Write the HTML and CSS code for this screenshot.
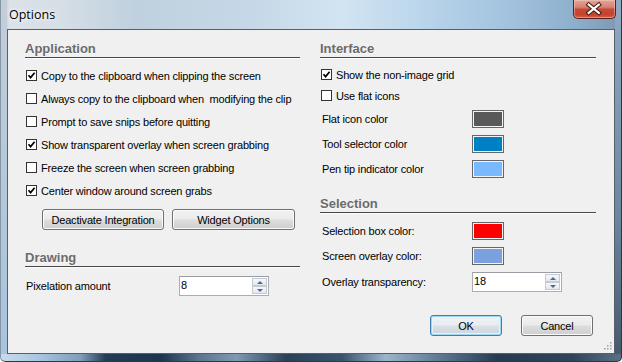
FILE: index.html
```html
<!DOCTYPE html>
<html lang="en">
<head>
    <meta charset="UTF-8">
    <title>Options</title>
    <link rel="stylesheet" href="styles.css">
</head>
<body>
    <div class="window">
        <div class="titlebar">
            <span class="title">Options</span>
            <div class="close">
                <svg width="43" height="19" viewBox="0 0 43 19">
                    <path d="M16 4.5 L26.5 13 M26.5 4.5 L16 13" stroke="#3b1510" stroke-width="4.2" stroke-linecap="square"/>
                    <path d="M16 4.5 L26.5 13 M26.5 4.5 L16 13" stroke="#fff" stroke-width="2.2" stroke-linecap="square"/>
                </svg>
            </div>
        </div>

        <div class="client">
            <div class="col">
                <h3 class="group">Application</h3>
                <ul class="checks">
                    <li><span class="box"><svg viewBox="0 0 9 9"><path d="M1.5 4.2 L3.6 6.6 L7.6 1.8"/></svg></span>Copy to the clipboard when clipping the screen</li>
                    <li><span class="box"></span>Always copy to the clipboard when&nbsp; modifying the clip</li>
                    <li><span class="box"></span>Prompt to save snips before quitting</li>
                    <li><span class="box"><svg viewBox="0 0 9 9"><path d="M1.5 4.2 L3.6 6.6 L7.6 1.8"/></svg></span>Show transparent overlay when screen grabbing</li>
                    <li><span class="box"></span>Freeze the screen when screen grabbing</li>
                    <li><span class="box"><svg viewBox="0 0 9 9"><path d="M1.5 4.2 L3.6 6.6 L7.6 1.8"/></svg></span>Center window around screen grabs</li>
                </ul>
                <div class="actions">
                    <button class="btn btn-deactivate">Deactivate Integration</button>
                    <button class="btn btn-widget">Widget Options</button>
                </div>

                <h3 class="group group-drawing">Drawing</h3>
                <div class="field">
                    <span class="label">Pixelation amount</span>
                    <div class="spin">
                        <span class="spin-value">8</span>
                        <span class="spin-btns"><span class="spin-up"></span><span class="spin-down"></span></span>
                    </div>
                </div>
            </div>

            <div class="col">
                <h3 class="group">Interface</h3>
                <ul class="checks checks-tight">
                    <li><span class="box"><svg viewBox="0 0 9 9"><path d="M1.5 4.2 L3.6 6.6 L7.6 1.8"/></svg></span>Show the non-image grid</li>
                    <li><span class="box"></span>Use flat icons</li>
                </ul>
                <div class="colors">
                    <div class="color-row"><span class="label label-right">Flat icon color</span><span class="swatch sw-gray"></span></div>
                    <div class="color-row"><span class="label label-right">Tool selector color</span><span class="swatch sw-blue"></span></div>
                    <div class="color-row"><span class="label label-right">Pen tip indicator color</span><span class="swatch sw-light"></span></div>
                </div>

                <h3 class="group group-selection">Selection</h3>
                <div class="colors colors-selection">
                    <div class="color-row"><span class="label label-right">Selection box color:</span><span class="swatch sw-red"></span></div>
                    <div class="color-row"><span class="label label-right">Screen overlay color:</span><span class="swatch sw-overlay"></span></div>
                </div>
                <div class="field field-right">
                    <span class="label label-right">Overlay transparency:</span>
                    <div class="spin">
                        <span class="spin-value">18</span>
                        <span class="spin-btns"><span class="spin-up"></span><span class="spin-down"></span></span>
                    </div>
                </div>

                <div class="footer">
                    <button class="btn btn-dialog btn-default">OK</button>
                    <button class="btn btn-dialog">Cancel</button>
                </div>
            </div>

            <svg class="grip" width="8" height="8" viewBox="0 0 8 8">
                <rect x="6" y="0" width="1.5" height="1.5" fill="#a0a0a0"/>
                <rect x="3" y="3" width="1.5" height="1.5" fill="#a0a0a0"/>
                <rect x="6" y="3" width="1.5" height="1.5" fill="#a0a0a0"/>
                <rect x="0" y="6" width="1.5" height="1.5" fill="#a0a0a0"/>
                <rect x="3" y="6" width="1.5" height="1.5" fill="#a0a0a0"/>
                <rect x="6" y="6" width="1.5" height="1.5" fill="#a0a0a0"/>
            </svg>
        </div>
    </div>
</body>
</html>
```

FILE: styles.css
```css
html, body {
    margin: 0;
    padding: 0;
    background: #fff;
}
.window {
    width: 622px;
    height: 362px;
    box-sizing: border-box;
    padding: 0 7px 8px;
    display: flex;
    flex-direction: column;
    border-radius: 0 0 5px 5px;
    background:
        linear-gradient(to right, #c9dcec 0, #a9c7e2 6%, #7d9dbc 13%, #243b55 17%, #1d3550 26%, #5b7590 32%, #7f99b2 38%, #2a4058 46%, #39536e 55%, #9bb5cc 62%, #627d98 70%, #263b52 80%, #2f4459 92%, #5a7187 100%) left bottom / 100% 8px no-repeat,
        linear-gradient(#8faac3, #6d869e 60%, #43576b) right top / 7px 100% no-repeat,
        linear-gradient(#c3ced8, #b2c7da 60%, #a7c4de) left top / 7px 100% no-repeat,
        linear-gradient(to right, #a3b1bf 0, #dbe2e8 1.5%, #d6dee6 10%, #bfd0df 22%, #c6d8e7 40%, #d2e4f1 55%, #bad5eb 68%, #a2c2de 82%, #8fb0cd 92%, #7c97b1 100%);
    box-shadow: inset -1px 0 #2c3844, inset 1px 0 #8596a6, inset 0 -1px #2c3844;
}
.titlebar {
    height: 29px;
    display: flex;
    align-items: flex-start;
}
.title {
    padding: 6px 0 0 2px;
    font: 12.5px/17px "Open Sans", "Liberation Sans", sans-serif;
    color: #000;
    text-shadow: 0 0 6px #fff, 0 0 3px #fff;
}
.close {
    margin-left: auto;
    margin-right: -1px;
    width: 43px;
    height: 19px;
    box-sizing: border-box;
    border: 1px solid #5e1d15;
    border-top: none;
    border-radius: 0 0 5px 5px;
    background: linear-gradient(#e1a596 0, #d68272 40%, #c44a37 52%, #c5412d 80%, #d2624c 100%);
    box-shadow: inset 0 0 0 1px rgba(255, 210, 200, 0.45);
    display: flex;
    justify-content: center;
}
.close svg {
    display: block;
    margin-left: -1px;
}

.client {
    flex: 1;
    position: relative;
    box-sizing: border-box;
    border: 1px solid #56606b;
    background: #f0f0f0;
    display: grid;
    grid-template-columns: 275px 276px;
    column-gap: 20px;
    align-content: start;
    padding: 10px 18px 0 17px;
    font: 11px "Liberation Sans", Arial, sans-serif;
    letter-spacing: -0.18px;
    color: #000;
}
.group {
    margin: 0;
    height: 17px;
    font: bold 13px/17px "Liberation Sans", Arial, sans-serif;
    letter-spacing: 0;
    color: #6b6b6b;
    text-shadow: 0 1px 0 #fafafa;
    border-bottom: 1px solid #474747;
    box-shadow: 0 1px 0 #fdfdfd;
}
.group-drawing {
    margin-top: 19px;
}
.group-selection {
    margin-top: 17px;
}

.checks {
    list-style: none;
    margin: 6px 0 0;
    padding: 0 0 0 1px;
}
.checks li {
    height: 23px;
    display: flex;
    align-items: center;
    white-space: nowrap;
}
.checks-tight li {
    height: 21px;
}
.box {
    width: 11px;
    height: 11px;
    box-sizing: border-box;
    border: 1px solid #333;
    background: #fff;
    margin-right: 4px;
    flex: none;
}
.box svg {
    display: block;
    width: 9px;
    height: 9px;
}
.box path {
    fill: none;
    stroke: #000;
    stroke-width: 1.7;
}

.actions {
    display: flex;
    gap: 8px;
    padding-left: 17px;
    margin-top: 7px;
}
.btn {
    height: 21px;
    padding: 0;
    border: 1px solid #707070;
    border-radius: 3px;
    background: linear-gradient(#f2f2f2 0, #ebebeb 48%, #dddddd 52%, #cfcfcf 100%);
    box-shadow: inset 0 0 0 1px #fbfbfb;
    font: 11px "Liberation Sans", Arial, sans-serif;
    letter-spacing: -0.18px;
    color: #000;
}
.btn-deactivate {
    width: 122px;
}
.btn-widget {
    width: 123px;
}
.btn-dialog {
    width: 72px;
}
.btn-default {
    border-color: #3c7fb1;
    box-shadow: inset 0 0 0 1px #9fd6f2, inset 0 0 0 2px #e4f3fb;
    background: linear-gradient(#f0f3f6 0, #e8edf1 48%, #d9e0e6 52%, #cdd5dc 100%);
}

.field {
    display: flex;
    align-items: center;
    height: 20px;
    margin-top: 9px;
}
.field-right {
    margin-top: 7px;
}
.label {
    width: 154px;
    padding-left: 1px;
    box-sizing: border-box;
    flex: none;
    white-space: nowrap;
}
.label-right {
    width: 152px;
    padding-left: 2px;
}
.spin {
    width: 90px;
    height: 20px;
    box-sizing: border-box;
    border: 1px solid #abadb3;
    border-top-color: #9a9ca4;
    background: #fff;
    display: flex;
    align-items: stretch;
}
.spin-value {
    flex: 1;
    padding-left: 1px;
    line-height: 17px;
}
.spin-btns {
    width: 15px;
    display: flex;
    flex-direction: column;
    padding: 1px 1px 1px 0;
    gap: 0;
}
.spin-up, .spin-down {
    flex: 1;
    border: 1px solid #c5cbd3;
    background: linear-gradient(#f6f7f9, #e4e8ee);
    display: flex;
    align-items: center;
    justify-content: center;
}
.spin-up::after {
    content: "";
    border-left: 3px solid transparent;
    border-right: 3px solid transparent;
    border-bottom: 3px solid #4d6a96;
}
.spin-down::after {
    content: "";
    border-left: 3px solid transparent;
    border-right: 3px solid transparent;
    border-top: 3px solid #4d6a96;
}

.colors {
    margin-top: 4px;
    display: flex;
    flex-direction: column;
    gap: 7px;
}
.colors-selection {
    margin-top: 9px;
}
.color-row {
    height: 18px;
    display: flex;
    align-items: center;
}
.swatch {
    width: 32px;
    height: 18px;
    box-sizing: border-box;
    border: 1px solid #666;
    box-shadow: inset 0 0 0 1px #f4f4f4;
}
.sw-gray { background: #595959; }
.sw-blue { background: #0080c4; }
.sw-light { background: #7ab8ff; }
.sw-red { background: #ff0000; }
.sw-overlay { background: #7aa1de; }

.footer {
    display: flex;
    justify-content: flex-end;
    gap: 19px;
    padding-right: 3px;
    margin-top: 23px;
}

.grip {
    position: absolute;
    right: 2px;
    bottom: 3px;
}
```
